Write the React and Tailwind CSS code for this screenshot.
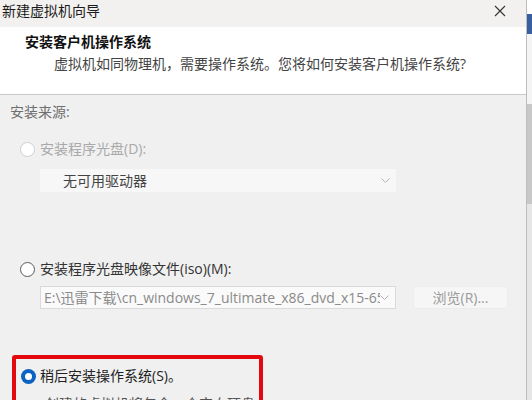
import React from "react";

const font = { fontFamily: '"Open Sans", "Noto Sans CJK SC", sans-serif' };

function Chevron() {
  return (
    <svg width="9" height="5" viewBox="0 0 9 5" className="shrink-0">
      <path d="M0.5 0.5 L4.5 4.5 L8.5 0.5" fill="none" stroke="#b4b4b4" strokeWidth="1" />
    </svg>
  );
}

function Radio({ checked, disabled }) {
  if (checked) {
    return (
      <span className="w-[15px] h-[15px] rounded-full bg-[#0a62c2] flex items-center justify-center shrink-0">
        <span className="w-[7px] h-[7px] rounded-full bg-white" />
      </span>
    );
  }
  return (
    <span
      className={`w-[15px] h-[15px] rounded-full border shrink-0 bg-white ${
        disabled ? "border-[#cfcfcf]" : "border-[#5a5a5a]"
      }`}
    />
  );
}

export default function App() {
  return (
    <div className="w-[532px] h-[400px] overflow-hidden flex bg-[#f0f0f0]" style={font}>
      <div className="w-[527px] shrink-0 flex flex-col border-r border-[#bdbdbd]">
        {/* title bar */}
        <div className="h-[27px] shrink-0 bg-[#f2f1ef] flex items-start justify-between pl-[2px] pr-[20px]">
          <span className="text-[14px] leading-[22px] text-[#1a1a1a]">新建虚拟机向导</span>
          <svg width="12" height="12" viewBox="0 0 12 12" className="mt-[5px]">
            <path d="M1 1 L11 11 M11 1 L1 11" stroke="#333" strokeWidth="1.1" />
          </svg>
        </div>

        {/* header */}
        <div className="h-[68px] shrink-0 bg-white border-b border-[#c9c9c9] pl-[25px] pt-[5px]">
          <div className="text-[14px] leading-[20px] font-bold text-[#111]">安装客户机操作系统</div>
          <div className="text-[14px] leading-[20px] text-[#444] pl-[29px] mt-[2px]">
            虚拟机如同物理机，需要操作系统。您将如何安装客户机操作系统?
          </div>
        </div>

        {/* body */}
        <div className="flex-1 flex flex-col pl-[10px] pt-[7px]">
          <div className="text-[14px] leading-[20px] text-[#6e6e6e]">安装来源:</div>

          <div className="flex items-center gap-[5px] pl-[10px] mt-[17px]">
            <Radio disabled />
            <span className="text-[14px] leading-[20px] text-[#a9a9a9]">安装程序光盘(D):</span>
          </div>
          <div className="ml-[30px] mt-[10px] w-[356px] h-[23px] shrink-0 bg-[#f7f7f7] flex items-center justify-between pl-[23px] pr-[6px]">
            <span className="text-[14px] text-[#444]">无可用驱动器</span>
            <Chevron />
          </div>

          <div className="flex items-center gap-[5px] pl-[10px] mt-[67px]">
            <Radio />
            <span className="text-[14px] leading-[20px] text-[#333]">安装程序光盘映像文件(iso)(M):</span>
          </div>
          <div className="flex items-center mt-[7px]">
            <div className="ml-[30px] w-[356px] h-[23px] bg-[#fafafa] border border-[#dadada] flex items-center justify-between pl-[3px] pr-[6px] overflow-hidden">
              <span className="text-[14px] text-[#8a8a8a] whitespace-nowrap overflow-hidden">
                E:\迅雷下载\cn_windows_7_ultimate_x86_dvd_x15-659
              </span>
              <Chevron />
            </div>
            <div className="ml-[17px] w-[95px] h-[23px] bg-[#f6f6f6] border border-[#ececec] rounded-[3px] flex items-center justify-center text-[14px] text-[#9a9a9a]">
              浏览(R)...
            </div>
          </div>

          <div className="ml-[2px] mt-[46px] w-[251px] h-[60px] shrink-0 border-[4px] border-[#e3090f] rounded-[3px] pl-[5px] pt-[7px]">
            <div className="flex items-center gap-[4px]">
              <Radio checked />
              <span className="text-[14px] leading-[20px] text-[#222]">稍后安装操作系统(S)。</span>
            </div>
            <div className="pl-[24px] mt-[8px] text-[14px] leading-[20px] text-[#555] whitespace-nowrap">
              创建的虚拟机将包含一个空白硬盘。
            </div>
          </div>
        </div>
      </div>
      <div className="flex-1 flex flex-col">
        <div className="h-[14px] bg-white" />
        <div className="h-[20px] bg-[#3a5fa0]" />
        <div className="h-[70px] bg-[#f4f4f4]" />
        <div className="h-[100px] bg-[#c8c8c8]" />
        <div className="flex-1 bg-[#e6e6e6]" />
      </div>
    </div>
  );
}
